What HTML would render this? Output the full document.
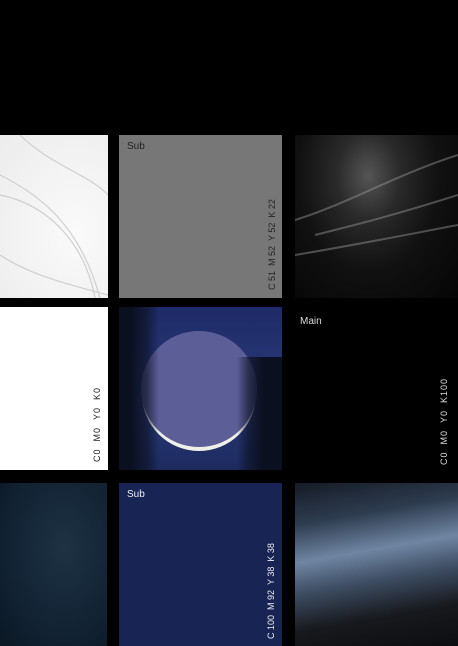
<!DOCTYPE html>
<html><head><meta charset="utf-8"><style>
*{margin:0;padding:0;box-sizing:border-box}
body{width:458px;height:646px;background:#000;position:relative;overflow:hidden;font-family:"Liberation Sans","DejaVu Sans",sans-serif}
.t{position:absolute;overflow:hidden}
.lbl{position:absolute;left:8px;top:6px;font-size:10px}
.v{position:absolute;font-size:9px;letter-spacing:0;white-space:nowrap;transform-origin:left top;transform:rotate(-90deg)}
</style></head><body>
<div class="t" style="left:0;top:135px;width:108px;height:163px;background:radial-gradient(ellipse at 70% 60%,#fafafa,#ececec)">
<svg width="108" height="163"><g fill="none" stroke="#cfcfcf" stroke-width="1.2"><path d="M0 40 C40 60 80 90 100 163"/><path d="M0 60 C50 70 85 110 95 163"/><path d="M0 120 C30 140 70 150 108 160"/><path d="M20 0 C50 30 90 40 108 60"/></g></svg></div>
<div class="t" style="left:119px;top:135px;width:163px;height:163px;background:#777">
<div class="lbl" style="color:#222">Sub</div>
<div class="v" style="left:148px;top:155px;color:#222">C 51 &nbsp;M 52 &nbsp;Y 52 &nbsp;K 22</div></div>
<div class="t" style="left:295px;top:135px;width:163px;height:163px;background:radial-gradient(ellipse at 45% 25%,#555 0%,#2a2a2a 25%,#111 55%,#050505 100%)">
<svg width="163" height="163"><g fill="none" stroke="#999" stroke-width="2" opacity=".45"><path d="M0 85 C50 70 100 40 163 20"/><path d="M0 120 C60 110 110 100 163 90"/><path d="M20 100 C60 90 100 80 163 60"/></g></svg></div>
<div class="t" style="left:0;top:307px;width:108px;height:163px;background:#fff">
<div class="v" style="left:92px;top:155px;color:#222;letter-spacing:1px">C0 &nbsp;M0 &nbsp;Y0 &nbsp;K0</div></div>
<div class="t" style="left:119px;top:307px;width:163px;height:163px;background:linear-gradient(#1e2b68,#2a3a7a 60%,#1c2a5e)">
<div style="position:absolute;left:22px;top:24px;width:116px;height:116px;border-radius:50%;background:#5c5e98;box-shadow:0 5px 0 -1px #f0f0ea"></div>
<div style="position:absolute;left:0;top:0;width:40px;height:163px;background:linear-gradient(90deg,#0b1020 30%,rgba(11,16,32,.6) 70%,rgba(11,16,32,0))"></div>
<div style="position:absolute;right:0;top:50px;width:45px;height:113px;background:linear-gradient(270deg,#0b1020 40%,rgba(11,16,32,.6) 75%,rgba(11,16,32,0))"></div></div>
<div class="t" style="left:295px;top:307px;width:163px;height:163px;background:#000">
<div class="lbl" style="color:#ddd;left:5px;top:9px">Main</div>
<div class="v" style="left:144px;top:158px;color:#ddd;letter-spacing:1px">C0 &nbsp;M0 &nbsp;Y0 &nbsp;K100</div></div>
<div class="t" style="left:0;top:483px;width:107px;height:163px;background:radial-gradient(ellipse at 60% 40%,#1d3244,#102030 70%,#0b1722)"></div>
<div class="t" style="left:119px;top:483px;width:163px;height:163px;background:#182454">
<div class="lbl" style="color:#eee">Sub</div>
<div class="v" style="left:147px;top:156px;color:#eee">C 100 &nbsp;M 92 &nbsp;Y 38 &nbsp;K 38</div></div>
<div class="t" style="left:295px;top:483px;width:163px;height:163px;background:linear-gradient(170deg,#151b25 0%,#2e3c50 22%,#6f86a2 42%,#3e4e64 58%,#17191d 78%,#0c0d10)"></div>
</body></html>
